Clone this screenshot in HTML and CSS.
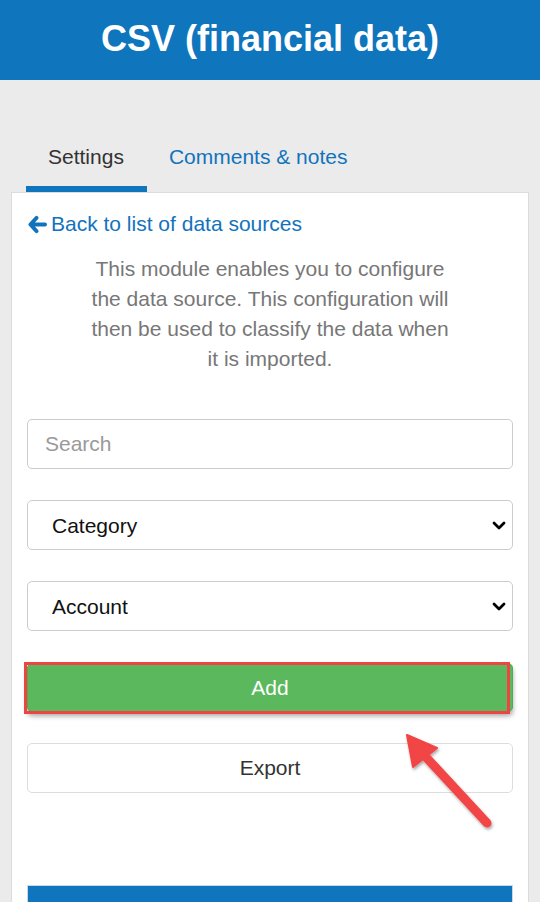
FILE: index.html
```html
<!DOCTYPE html>
<html lang="en">
<head>
<meta charset="utf-8">
<title>CSV (financial data)</title>
<link rel="stylesheet" href="styles.css">
</head>
<body>
<header class="topbar">
  <h1 class="title">CSV (financial data)</h1>
</header>
<main class="page">
  <nav class="tabs">
    <a class="tab tab-active">Settings</a>
    <a class="tab">Comments &amp; notes</a>
  </nav>
  <section class="panel">
    <a class="back-link">
      <svg class="back-icon" viewBox="0 0 20 20" width="20" height="20" aria-hidden="true">
        <path d="M9 3 L2.5 10 L9 17 M3 10 H18" fill="none" stroke="#1273bd" stroke-width="4" stroke-linecap="round" stroke-linejoin="round"/>
      </svg>
      <span>Back to list of data sources</span>
    </a>
    <p class="intro">This module enables you to configure the data source. This configuration will then be used to classify the data when it is imported.</p>

    <div class="form">
      <input class="field" type="text" placeholder="Search">
      <div class="select-wrap">
        <select class="field select"><option>Category</option></select>
        <svg class="chevron" viewBox="0 0 14 9" width="14" height="9" aria-hidden="true"><path d="M2 2 L7 7 L12 2" fill="none" stroke="#000" stroke-width="2.8" stroke-linecap="round" stroke-linejoin="round"/></svg>
      </div>
      <div class="select-wrap">
        <select class="field select"><option>Account</option></select>
        <svg class="chevron" viewBox="0 0 14 9" width="14" height="9" aria-hidden="true"><path d="M2 2 L7 7 L12 2" fill="none" stroke="#000" stroke-width="2.8" stroke-linecap="round" stroke-linejoin="round"/></svg>
      </div>
      <button class="btn btn-add">Add</button>
      <button class="btn btn-export">Export</button>
    </div>

    <div class="bottom-bar"></div>

    <svg class="annot-arrow" viewBox="0 0 110 110" width="110" height="110" aria-hidden="true">
      <defs>
        <filter id="sh" x="-20%" y="-20%" width="140%" height="140%">
          <feDropShadow dx="1" dy="2" stdDeviation="1.5" flood-color="#000" flood-opacity="0.35"/>
        </filter>
      </defs>
      <g filter="url(#sh)">
        <path d="M22 25 L85 93" stroke="#f24444" stroke-width="9" stroke-linecap="round"/>
        <path d="M5 5 L35 18 L11 37 Z" fill="#f24444" stroke="#f24444" stroke-width="2" stroke-linejoin="round"/>
      </g>
    </svg>
  </section>
</main>
</body>
</html>
```

FILE: styles.css
```css
html, body {
  margin: 0;
  padding: 0;
}
body {
  background: #ebebeb;
  font-family: "Liberation Sans", Arial, sans-serif;
  font-size: 21px;
  color: #333;
  height: 902px;
  overflow: hidden;
}
.topbar {
  background: #0f75bd;
  height: 80px;
  display: flex;
  align-items: center;
  justify-content: center;
}
.title {
  margin: 0;
  color: #fff;
  font-size: 36px;
  font-weight: bold;
  line-height: 40px;
  padding-bottom: 2px;
}
.page {
  padding: 0 11px;
}
.tabs {
  display: flex;
  margin-top: 53px;
  padding-left: 15px;
}
.tab {
  display: block;
  padding: 12px 22px 17px;
  line-height: 24px;
  color: #1273bd;
  border-bottom: 6px solid transparent;
}
.tab-active {
  color: #333;
  border-bottom-color: #0f75bd;
  padding-left: 22px;
  padding-right: 23px;
}
.panel {
  position: relative;
  background: #fff;
  border: 1px solid #dcdcdc;
  border-bottom: none;
  padding: 19px 15px 0;
  height: 720px;
}
.back-link {
  display: flex;
  align-items: center;
  gap: 4px;
  color: #1273bd;
  line-height: 24px;
  margin-left: 1px;
}
.back-icon {
  width: 19px;
  height: 19px;
}
.intro {
  margin: 18px auto 0;
  max-width: 372px;
  text-align: center;
  color: #777;
  line-height: 30px;
}
.form {
  display: flex;
  flex-direction: column;
  gap: 31px;
  margin-top: 45px;
}
.field {
  box-sizing: border-box;
  width: 100%;
  height: 50px;
  border: 1px solid #cccccc;
  border-radius: 5px;
  background: #fff;
  font-family: inherit;
  font-size: 21px;
  padding: 0 17px;
  color: #222;
  margin: 0;
}
.field::placeholder {
  color: #9a9a9a;
}
.select-wrap {
  position: relative;
}
.select {
  -webkit-appearance: none;
  appearance: none;
  padding-left: 24px;
  color: #111;
}
.chevron {
  position: absolute;
  right: 7px;
  top: 21px;
  pointer-events: none;
}
.btn {
  box-sizing: border-box;
  width: 100%;
  height: 50px;
  font-family: inherit;
  font-size: 21px;
  border-radius: 5px;
  margin: 0;
}
.btn-add {
  position: relative;
  background: #5cb85c;
  color: #fff;
  border: 1px solid #4cae4c;
  box-shadow: 0 4px 5px rgba(0, 0, 0, 0.35);
  margin-top: 1px;
  height: 49px;
}
.btn-add::after {
  content: "";
  position: absolute;
  left: -4px;
  right: 2px;
  top: -2px;
  bottom: -3px;
  border: 3px solid #f04444;
}
.btn-export {
  background: #fff;
  color: #333;
  border: 1px solid #dddddd;
}
.bottom-bar {
  margin-top: 92px;
  height: 30px;
  background: #0f75bd;
  border: 1px solid #c8d8e8;
}
.annot-arrow {
  position: absolute;
  left: 390px;
  top: 537px;
}
```
